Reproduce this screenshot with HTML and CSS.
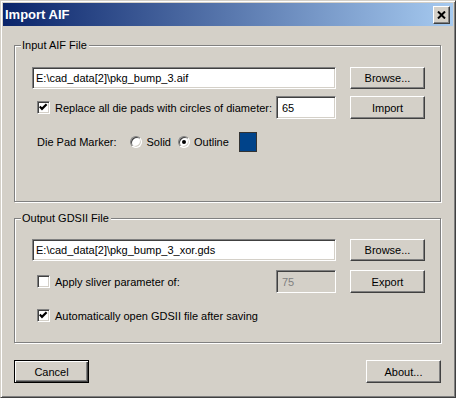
FILE: index.html
```html
<!DOCTYPE html>
<html lang="en">
<head>
    <meta charset="UTF-8">
    <title>Import AIF</title>
    <link rel="stylesheet" href="styles.css">
</head>
<body>
    <div class="window">
        <div class="titlebar">
            <span class="title">Import AIF</span>
            <span class="close-btn">
                <svg width="9" height="8" viewBox="0 0 9 8"><path d="M1 0.5 L8 7.5 M8 0.5 L1 7.5" stroke="#000" stroke-width="2" fill="none"/></svg>
            </span>
        </div>

        <div class="client">
            <!-- Input section -->
            <div class="group group-input">
                <div class="group-title">Input AIF File</div>
                <div class="row row-file">
                    <input class="edit path" type="text" value="E:\cad_data[2]\pkg_bump_3.aif">
                    <button class="btn">Browse...</button>
                </div>
                <div class="row row-option">
                    <label class="check">
                        <span class="box"><svg width="11" height="11" viewBox="0 0 11 11"><polyline points="1.8,4.6 4,6.9 8.6,2.3" stroke="#000" stroke-width="2.2" fill="none"/></svg></span>
                        Replace all die pads with circles of diameter:
                    </label>
                    <input class="edit small" type="text" value="65">
                    <button class="btn">Import</button>
                </div>
                <div class="row row-marker">
                    <span class="marker-label">Die Pad Marker:</span>
                    <label class="radio"><span class="dot"></span>Solid</label>
                    <label class="radio outline"><span class="dot on"></span>Outline</label>
                    <span class="swatch"></span>
                </div>
            </div>

            <!-- Output section -->
            <div class="group group-output">
                <div class="group-title">Output GDSII File</div>
                <div class="row row-file">
                    <input class="edit path" type="text" value="E:\cad_data[2]\pkg_bump_3_xor.gds">
                    <button class="btn">Browse...</button>
                </div>
                <div class="row row-option">
                    <label class="check">
                        <span class="box"></span>
                        Apply sliver parameter of:
                    </label>
                    <input class="edit small" type="text" value="75" disabled>
                    <button class="btn">Export</button>
                </div>
                <div class="row row-auto">
                    <label class="check">
                        <span class="box"><svg width="11" height="11" viewBox="0 0 11 11"><polyline points="1.8,4.6 4,6.9 8.6,2.3" stroke="#000" stroke-width="2.2" fill="none"/></svg></span>
                        Automatically open GDSII file after saving
                    </label>
                </div>
            </div>

            <div class="footer">
                <button class="btn default">Cancel</button>
                <button class="btn">About...</button>
            </div>
        </div>
    </div>
</body>
</html>
```

FILE: styles.css
```css
body {
    margin: 0;
    font-family: "Liberation Sans", Arial, sans-serif;
    font-size: 11px;
    color: #000;
    background: #d4d0c8;
}

.window {
    width: 456px;
    height: 398px;
    box-sizing: border-box;
    padding: 2px;
    border: 1px solid;
    border-color: #d4d0c8 #404040 #404040 #d4d0c8;
    box-shadow: inset 1px 1px #fff, inset -1px -1px #808080;
    background: #d4d0c8;
}

.titlebar {
    height: 23px;
    display: flex;
    align-items: center;
    justify-content: space-between;
    padding: 0 3px 0 2px;
    background: linear-gradient(to right, #0a246a, #a6caf0);
}

.title {
    color: #fff;
    font-weight: bold;
    font-size: 13px;
}

.close-btn {
    width: 17px;
    height: 18px;
    box-sizing: border-box;
    display: flex;
    align-items: center;
    justify-content: center;
    background: #d4d0c8;
    border: 1px solid;
    border-color: #fff #404040 #404040 #fff;
    box-shadow: inset -1px -1px #808080;
}

.client {
    padding: 0 12px 0 11px;
}

.group {
    border: 1px solid #808080;
    box-shadow: inset 1px 1px #fff, 1px 1px #fff;
    padding: 0 15px 0 17px;
}

.group-input {
    margin-top: 19px;
    padding-bottom: 49px;
}

.group-output {
    margin-top: 16px;
    padding-bottom: 20px;
}

.group-title {
    width: fit-content;
    height: 13px;
    line-height: 13px;
    margin: -7px 0 0 -11px;
    padding: 0 2px 0 1px;
    background: #d4d0c8;
}

.row {
    display: flex;
    align-items: center;
}

.row-file {
    height: 22px;
    gap: 14px;
}

.group-input .row-file {
    margin-top: 15px;
}

.group-output .row-file {
    margin-top: 14px;
}

.row-option {
    height: 23px;
}

.row-option .edit {
    margin-left: auto;
}

.row-option .btn {
    margin-left: 14px;
}

.group-input .row-option {
    margin-top: 7px;
}

.group-output .row-option {
    margin-top: 9px;
}

.row-marker {
    height: 20px;
    margin-top: 13px;
    padding-left: 5px;
}

.row-auto {
    height: 13px;
    margin-top: 16px;
}

.edit {
    box-sizing: border-box;
    height: 100%;
    margin: 0;
    padding: 0 3px;
    border: 1px solid;
    border-color: #808080 #fff #fff #808080;
    box-shadow: inset 1px 1px #404040, inset -1px -1px #d4d0c8;
    background: #fff;
    font: 11px "Liberation Sans", Arial, sans-serif;
    color: #000;
    outline: none;
    flex-shrink: 0;
}

.edit.path {
    width: 304px;
}

.edit.small {
    width: 60px;
    padding-left: 5px;
}

.edit:disabled {
    background: #d4d0c8;
    color: #808080;
}

.btn {
    width: 75px;
    height: 100%;
    box-sizing: border-box;
    margin: 0;
    padding: 0;
    border: 1px solid;
    border-color: #fff #404040 #404040 #fff;
    box-shadow: inset -1px -1px #808080;
    background: #d4d0c8;
    font: 11px "Liberation Sans", Arial, sans-serif;
    color: #000;
    flex-shrink: 0;
}

.btn.default {
    border-color: #000;
    box-shadow: inset 1px 1px #fff, inset -1px -1px #404040, inset -2px -2px #808080;
}

.check {
    display: flex;
    align-items: center;
    padding-left: 5px;
    white-space: nowrap;
}

.box {
    width: 13px;
    height: 13px;
    box-sizing: border-box;
    margin-right: 5px;
    border: 1px solid;
    border-color: #808080 #fff #fff #808080;
    box-shadow: inset 1px 1px #404040, inset -1px -1px #d4d0c8;
    background: #fff;
}

.box svg {
    display: block;
}

.marker-label {
    margin-right: 14px;
}

.radio {
    display: flex;
    align-items: center;
}

.radio.outline {
    margin-left: 7px;
}

.dot {
    width: 12px;
    height: 12px;
    box-sizing: border-box;
    margin-right: 4px;
    border-radius: 50%;
    border: 1px solid;
    border-color: #808080 #fff #fff #808080;
    box-shadow: inset 1px 1px #404040, inset -1px -1px #d4d0c8;
    background: #fff;
    display: flex;
    align-items: center;
    justify-content: center;
}

.dot.on::after {
    content: "";
    width: 4px;
    height: 4px;
    border-radius: 50%;
    background: #000;
}

.swatch {
    width: 18px;
    height: 20px;
    box-sizing: border-box;
    margin-left: 10px;
    border: 1px solid #333;
    background: #00438a;
}

.footer {
    display: flex;
    justify-content: space-between;
    height: 23px;
    margin-top: 17px;
}
```
